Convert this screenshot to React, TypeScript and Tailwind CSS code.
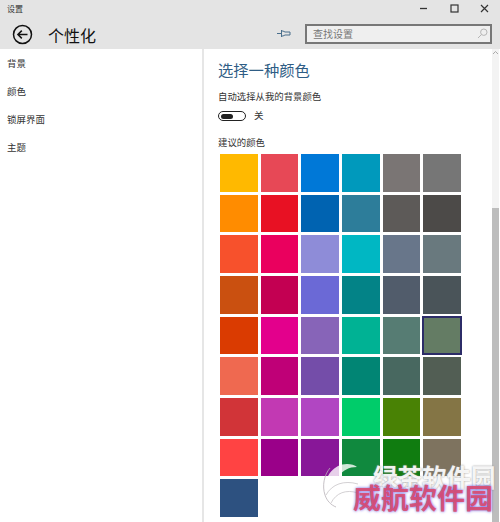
import * as React from 'react';

const FONT = "font-['Noto_Sans_CJK_SC','Noto_Sans',sans-serif]";

const rows = [
  ['#ffb900', '#e74856', '#0078d7', '#0099bc', '#7a7574', '#767676'],
  ['#ff8c00', '#e81123', '#0063b1', '#2d7d9a', '#5d5a58', '#4c4a48'],
  ['#f7512c', '#ea005e', '#8e8cd8', '#00b7c3', '#68768a', '#69797e'],
  ['#ca5010', '#c30052', '#6b69d6', '#038387', '#515c6b', '#4a5459'],
  ['#da3b01', '#e3008c', '#8764b8', '#00b294', '#567c73', '#647c64'],
  ['#ef6950', '#bf0077', '#744da9', '#018574', '#486860', '#525e54'],
  ['#d13438', '#c239b3', '#b146c2', '#00cc6a', '#498205', '#847545'],
  ['#ff4343', '#9a0089', '#881798', '#10893e', '#107c10', '#7e735f'],
  ['#2d5180'],
];

const navItems = ['背景', '颜色', '锁屏界面', '主题'];

function BackIcon() {
  return (
    <svg width="21" height="21" viewBox="0 0 21 21" fill="none" stroke="#111" className="shrink-0 mt-[3px]">
      <circle cx="10.5" cy="10.5" r="9" strokeWidth="1.5" />
      <path d="M15.5 10.5H6M9.8 6.6 5.9 10.5l3.9 3.9" strokeWidth="1.5" />
    </svg>
  );
}

function PinIcon() {
  return (
    <svg width="14" height="9" viewBox="0 0 14 9" fill="none" stroke="#4a6f8c" strokeWidth="1">
      <path d="M0 4.5h4.5M4.5 1v7M4.5 2h1.5l2 1h5v3h-5l-2 1H4.5" />
    </svg>
  );
}

function SearchIcon() {
  return (
    <svg width="11" height="11" viewBox="0 0 11 11" fill="none" stroke="#b5b5b5" strokeWidth="1">
      <circle cx="6.8" cy="4.2" r="3.2" />
      <path d="M4.5 6.5 1 10" />
    </svg>
  );
}

function WindowControls() {
  return (
    <div className="flex items-center">
      <svg width="9" height="9" viewBox="0 0 9 9" stroke="#333" strokeWidth="1.3" className="mr-[22px]">
        <path d="M1 4.5h7" />
      </svg>
      <svg width="9" height="9" viewBox="0 0 9 9" fill="none" stroke="#333" strokeWidth="1.2" className="mr-[21px]">
        <rect x="1" y="1" width="7" height="7" />
      </svg>
      <svg width="9" height="9" viewBox="0 0 9 9" stroke="#333" strokeWidth="1.2">
        <path d="M1 1l7 7M8 1 1 8" />
      </svg>
    </div>
  );
}

function Watermark() {
  return (
    <div className="absolute left-[322px] top-[462px] w-[178px] h-[60px] pointer-events-none">
      <svg width="38" height="46" viewBox="0 0 38 46" fill="none" className="absolute left-0 top-0">
        <path d="M3 26C3 14 12 2 25 2c4 0 8 1 10 3-8 0-14 3-19 10C10 16 5 20 3 26Z" fill="#ffffff" fillOpacity="0.8" />
        <path d="M8 6C2 13 0 24 3 33c2 6 6 10 11 12" stroke="#b8b2b8" strokeOpacity="0.8" strokeWidth="1" />
        <path d="M4 33C10 22 22 18 36 22M9 41C14 31 24 27 36 31" stroke="#c8c4c8" strokeOpacity="0.8" strokeWidth="1" />
      </svg>
      <div className="absolute left-[51px] top-[2px] text-[24.5px] leading-[26px] font-bold text-white/90 whitespace-nowrap [text-shadow:0_0_2px_#8a8a8a]">绿茶软件园</div>
      <div className="absolute left-[31px] top-[21px] text-[28px] leading-[28px] font-bold text-[#dc4a6c]/90 whitespace-nowrap [text-shadow:0_0_3px_#6a5be0]">威航软件园</div>
    </div>
  );
}

export default function App() {
  return (
    <div className={`${FONT} relative w-[500px] h-[522px] overflow-hidden bg-white text-[#222]`}>
      <div className="h-[49px] bg-[#e4e4e4] flex flex-col">
        <div className="h-[17px] pl-[7px] pr-[11px] flex items-center justify-between">
          <span className="text-[8px] leading-none text-[#333]">设置</span>
          <WindowControls />
        </div>
        <div className="flex-1 flex items-center pl-[12px] pr-[8px]">
          <BackIcon />
          <h1 className="ml-[15px] mt-[3px] text-[16px] leading-none text-[#111]">个性化</h1>
          <div className="ml-auto flex items-center gap-[14px]">
            <PinIcon />
            <div className="w-[187px] h-[20px] mt-[1px] border-2 border-[#777] bg-[#efefef] flex items-center justify-between pl-[6px] pr-[2px]">
              <span className="text-[10px] leading-none text-[#777]">查找设置</span>
              <SearchIcon />
            </div>
          </div>
        </div>
      </div>

      <div className="flex h-[473px]">
        <nav className="w-[204px] shrink-0 border-r-2 border-[#e6e6e6] pl-[7px] pt-[1px] flex flex-col">
          {navItems.map((item) => (
            <a key={item} className="h-[28px] flex items-center text-[9.5px] leading-none text-[#333]">{item}</a>
          ))}
        </nav>

        <main className="flex-1 pl-[14px]">
          <h2 className="mt-[11px] text-[15.3px] leading-[18px] text-[#2f5d85]">选择一种颜色</h2>
          <p className="mt-[12px] text-[9.4px] leading-[12px] text-[#333]">自动选择从我的背景颜色</p>
          <div className="mt-[9px] flex items-center">
            <div className="w-[28px] h-[10px] rounded-full border-[1.5px] border-[#222] flex items-center pl-[2px]">
              <div className="w-[12px] h-[5px] rounded-full bg-[#222]" />
            </div>
            <span className="ml-[8px] text-[9.5px] leading-none text-[#333]">关</span>
          </div>
          <p className="mt-[15px] text-[9.4px] leading-[12px] text-[#333]">建议的颜色</p>
          <div className="mt-[6px] ml-[2px] grid grid-cols-[repeat(6,37.67px)] auto-rows-[37.67px] gap-[3px]">
            {rows.flat().map((color, i) => (
              <div
                key={i}
                className={i === 29 ? 'border-2 border-[#2c2c68] -m-[1px]' : ''}
                style={{ backgroundColor: color }}
              />
            ))}
          </div>
        </main>

        <div className="w-[7px] mr-[1px] shrink-0 bg-[#f3f3f3] flex flex-col">
          <svg width="7" height="5" viewBox="0 0 7 5" fill="none" stroke="#aaa" className="mt-[1px]">
            <path d="M1 4l2.5-2.5L6 4" />
          </svg>
          <div className="mt-[153px] flex-1 bg-[#bdbdbd]" />
        </div>
      </div>

      <Watermark />
    </div>
  );
}
